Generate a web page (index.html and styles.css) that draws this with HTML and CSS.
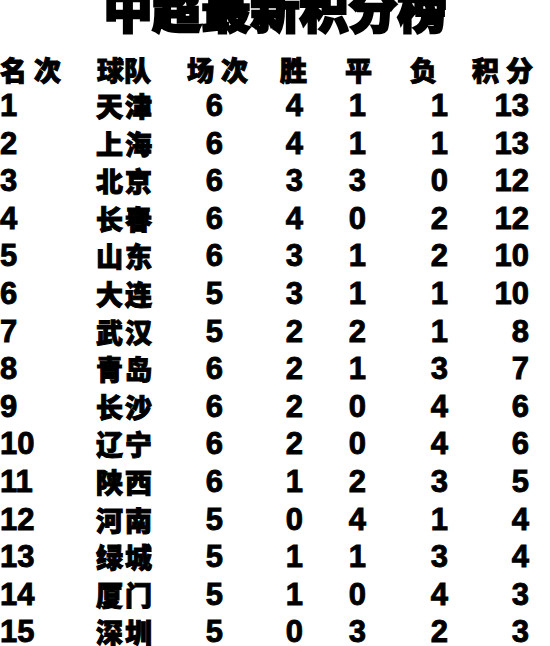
FILE: index.html
```html
<!DOCTYPE html>
<html lang="zh-CN">
<head>
<meta charset="utf-8">
<title>中超最新积分榜</title>
<link rel="stylesheet" href="styles.css">
</head>
<body>
<div class="page">
  <h1 class="title">中超最新积分榜</h1>
  <div class="head">
    <span class="h h-rank">名次</span>
    <span class="h h-team">球队</span>
    <span class="h h-played">场次</span>
    <span class="h h-w">胜</span>
    <span class="h h-d">平</span>
    <span class="h h-l">负</span>
    <span class="h h-pts">积分</span>
  </div>
  <div class="table">
    <span class="n rank">1</span><span class="team">天津</span><span class="n">6</span><span class="n">4</span><span class="n">1</span><span class="n">1</span><span class="n">13</span>
    <span class="n rank">2</span><span class="team">上海</span><span class="n">6</span><span class="n">4</span><span class="n">1</span><span class="n">1</span><span class="n">13</span>
    <span class="n rank">3</span><span class="team">北京</span><span class="n">6</span><span class="n">3</span><span class="n">3</span><span class="n">0</span><span class="n">12</span>
    <span class="n rank">4</span><span class="team">长春</span><span class="n">6</span><span class="n">4</span><span class="n">0</span><span class="n">2</span><span class="n">12</span>
    <span class="n rank">5</span><span class="team">山东</span><span class="n">6</span><span class="n">3</span><span class="n">1</span><span class="n">2</span><span class="n">10</span>
    <span class="n rank">6</span><span class="team">大连</span><span class="n">5</span><span class="n">3</span><span class="n">1</span><span class="n">1</span><span class="n">10</span>
    <span class="n rank">7</span><span class="team">武汉</span><span class="n">5</span><span class="n">2</span><span class="n">2</span><span class="n">1</span><span class="n">8</span>
    <span class="n rank">8</span><span class="team">青岛</span><span class="n">6</span><span class="n">2</span><span class="n">1</span><span class="n">3</span><span class="n">7</span>
    <span class="n rank">9</span><span class="team">长沙</span><span class="n">6</span><span class="n">2</span><span class="n">0</span><span class="n">4</span><span class="n">6</span>
    <span class="n rank">10</span><span class="team">辽宁</span><span class="n">6</span><span class="n">2</span><span class="n">0</span><span class="n">4</span><span class="n">6</span>
    <span class="n rank">11</span><span class="team">陕西</span><span class="n">6</span><span class="n">1</span><span class="n">2</span><span class="n">3</span><span class="n">5</span>
    <span class="n rank">12</span><span class="team">河南</span><span class="n">5</span><span class="n">0</span><span class="n">4</span><span class="n">1</span><span class="n">4</span>
    <span class="n rank">13</span><span class="team">绿城</span><span class="n">5</span><span class="n">1</span><span class="n">1</span><span class="n">3</span><span class="n">4</span>
    <span class="n rank">14</span><span class="team">厦门</span><span class="n">5</span><span class="n">1</span><span class="n">0</span><span class="n">4</span><span class="n">3</span>
    <span class="n rank">15</span><span class="team">深圳</span><span class="n">5</span><span class="n">0</span><span class="n">3</span><span class="n">2</span><span class="n">3</span>
  </div>
</div>
</body>
</html>
```

FILE: styles.css
```css
html, body {
  margin: 0;
  padding: 0;
  background: #fff;
  color: #000;
}

.page {
  width: 550px;
  height: 646px;
  overflow: hidden;
  font-family: "Noto Sans CJK SC", "Liberation Sans", sans-serif;
}

.title {
  margin: -18px 0 0 0;
  font-size: 49px;
  line-height: 49px;
  font-weight: 900;
  text-align: center;
  -webkit-text-stroke: 2.5px #000;
}

.head {
  display: grid;
  grid-template-columns: 97px 90px 93px 65px 65px 62px 1fr;
  margin-top: 22px;
  height: 34px;
  line-height: 34px;
}

.h {
  font-size: 27px;
  font-weight: 900;
  letter-spacing: 7px;
  white-space: nowrap;
  -webkit-text-stroke: 1px #000;
}

.h-team {
  letter-spacing: 0;
}

.table {
  display: grid;
  grid-template-columns: 96px 80px 47px 80px 63px 82px 81px;
  grid-auto-rows: 37.6px;
  width: 529px;
}

.n {
  padding-top: 6px;
  font-family: "Liberation Sans", Arial, sans-serif;
  font-size: 31px;
  font-weight: 700;
  line-height: 25px;
  text-align: right;
  -webkit-text-stroke: 0.9px #000;
}

.rank {
  text-align: left;
}

.team {
  padding-top: 6px;
  font-size: 27px;
  font-weight: 900;
  line-height: 25px;
  letter-spacing: 2px;
  white-space: nowrap;
  -webkit-text-stroke: 1px #000;
}
```
